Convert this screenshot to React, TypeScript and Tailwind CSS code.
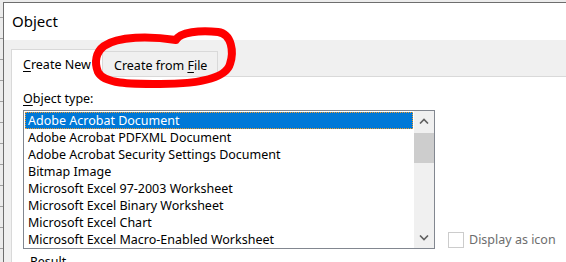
import React from "react";

const items = [
  "Adobe Acrobat Document",
  "Adobe Acrobat PDFXML Document",
  "Adobe Acrobat Security Settings Document",
  "Bitmap Image",
  "Microsoft Excel 97-2003 Worksheet",
  "Microsoft Excel Binary Worksheet",
  "Microsoft Excel Chart",
  "Microsoft Excel Macro-Enabled Worksheet",
];

function Chevron({ up }: { up?: boolean }) {
  return (
    <svg width="10" height="6" viewBox="0 0 10 6" className="block">
      <path
        d={up ? "M1 5.5 L5 1.5 L9 5.5" : "M1 0.5 L5 4.5 L9 0.5"}
        fill="none"
        stroke="#606060"
        strokeWidth="1.6"
      />
    </svg>
  );
}

export default function App() {
  return (
    <div className="relative w-[566px] h-[262px] overflow-hidden flex bg-[#ececec] text-black font-['Segoe_UI','Noto_Sans',sans-serif]">
      {/* sheet edge behind the dialog */}
      <div className="w-[3px] shrink-0 flex flex-col gap-[20px] pt-[17px]">
        {Array.from({ length: 12 }).map((_, i) => (
          <div key={i} className="h-px shrink-0 bg-[#a0a0a0]" />
        ))}
      </div>

      <div className="flex-1 min-h-0 flex flex-col mt-[2px] border-l border-t border-[#6e6e6e]">
        <div className="h-[37px] shrink-0 bg-white pl-[8px] flex items-center text-[15px] pb-[1px]">Object</div>

        <div className="flex-1 min-h-0 flex flex-col bg-[#f0f0f0] pl-[7px]">
          <div className="h-[37px] shrink-0 flex items-end text-[12.5px]">
            <div className="w-[92px] h-[28px] bg-white border-l border-t border-r border-[#d9d9d9] pl-[11px] pt-[6px] whitespace-nowrap">
              <span className="underline underline-offset-2">C</span>reate New
            </div>
            <div className="w-[115px] h-[26px] border border-l-0 border-[#d9d9d9] pl-[11px] pt-[5px] whitespace-nowrap">
              Create from <span className="underline underline-offset-2">F</span>ile
            </div>
            <div className="flex-1 h-full border-b border-[#d9d9d9]" />
          </div>

          <div className="flex-1 min-h-0 bg-white border-l border-[#d9d9d9] pl-[11px] pt-[13px] text-[12.5px]">
            <div className="leading-[17px]">
              <span className="underline underline-offset-2">O</span>bject type:
            </div>
            <div className="flex items-start mt-[3px]">
              <div className="flex flex-col shrink-0">
                <div className="w-[412px] h-[139px] border border-[#828790] flex">
                  <div className="flex-1 pl-px pt-px pr-px">
                    {items.map((t, i) => (
                      <div
                        key={t}
                        className={
                          i === 0
                            ? "h-[17px] leading-[15px] pl-[2px] bg-[#0078d7] text-white border border-dotted border-[#f29b2c] whitespace-nowrap"
                            : "h-[17px] leading-[17px] pl-[3px] whitespace-nowrap"
                        }
                      >
                        {t}
                      </div>
                    ))}
                  </div>
                  <div className="w-[20px] bg-[#f0f0f0] flex flex-col">
                    <div className="h-[20px] flex items-center justify-center">
                      <Chevron up />
                    </div>
                    <div className="h-[30px] mt-[2px] bg-[#cdcdcd]" />
                    <div className="flex-1" />
                    <div className="h-[20px] flex items-center justify-center">
                      <Chevron />
                    </div>
                  </div>
                </div>
                <div className="ml-[7px] mt-[5px] leading-[16px]">Result</div>
              </div>
              <div className="flex items-center gap-[5px] ml-[13px] mt-[121px] whitespace-nowrap">
                <div className="w-[16px] h-[16px] border border-[#cccccc] bg-white" />
                <span className="text-[#6d6d6d]">Display as icon</span>
              </div>
            </div>
          </div>
        </div>
      </div>

      {/* hand-drawn red highlight */}
      <svg
        className="absolute top-0 left-0 pointer-events-none"
        width="566"
        height="262"
        viewBox="0 0 566 262"
      >
        <path
          d="M104 46 C118 36 150 36 176 40 C180 32 200 30 218 32 C232 34 234 52 230 64 C226 78 200 84 160 84 C130 84 104 84 98 72 C94 62 96 52 104 46 Z"
          fill="none"
          stroke="#ff0000"
          strokeWidth="8"
          strokeLinejoin="round"
        />
      </svg>
    </div>
  );
}
